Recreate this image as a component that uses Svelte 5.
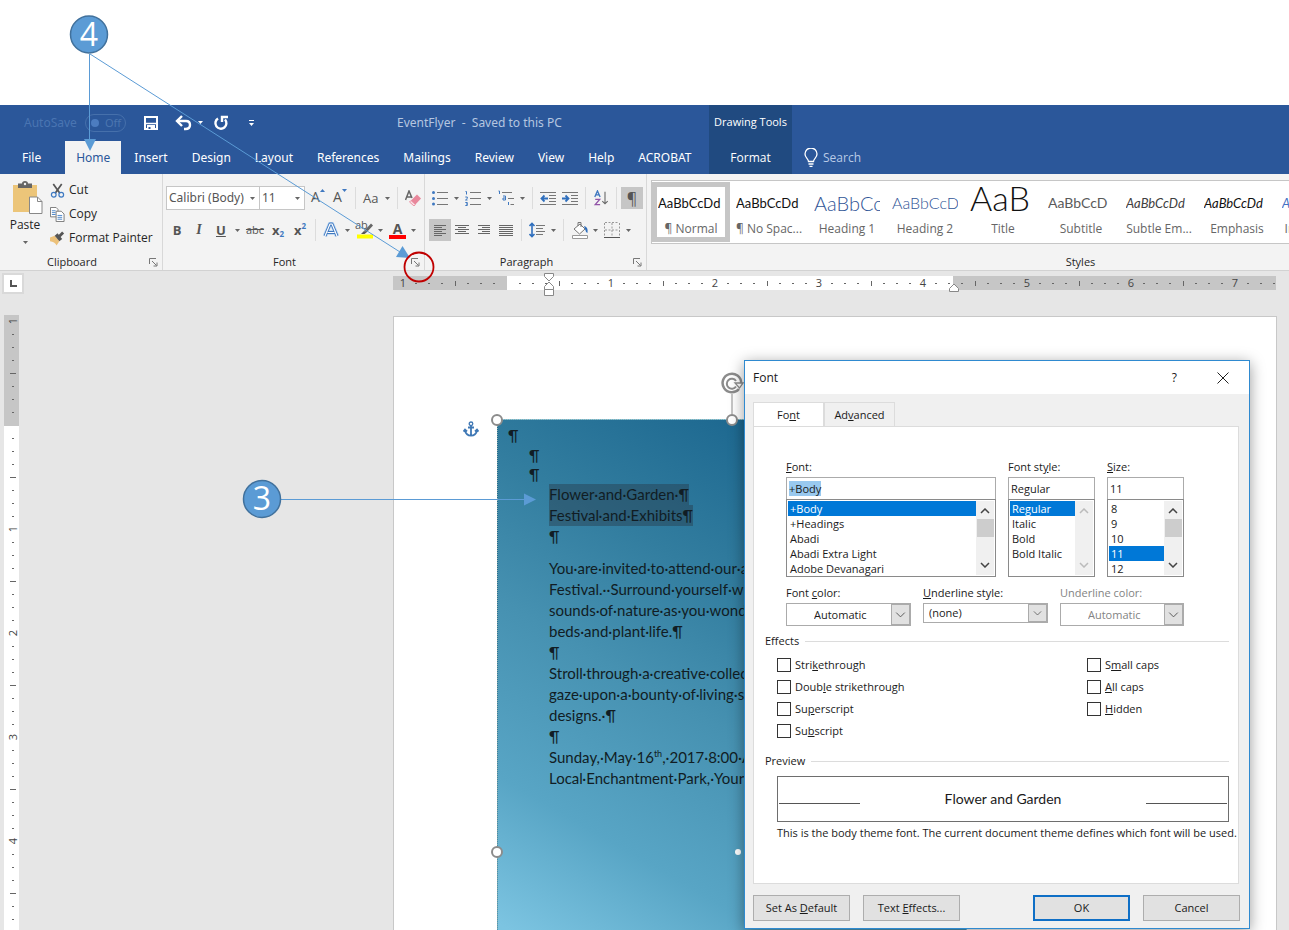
<script>
  import { onMount } from "svelte";

  const tabs = ["File", "Home", "Insert", "Design", "Layout", "References", "Mailings", "Review", "View", "Help", "ACROBAT"];
  let activeTab = $state("Home");

  const styles = [
    { sample: "AaBbCcDd", label: "¶ Normal", kind: "body" },
    { sample: "AaBbCcDd", label: "¶ No Spac...", kind: "body" },
    { sample: "AaBbCc", label: "Heading 1", kind: "h1" },
    { sample: "AaBbCcD", label: "Heading 2", kind: "h2" },
    { sample: "AaB", label: "Title", kind: "title" },
    { sample: "AaBbCcD", label: "Subtitle", kind: "subtitle" },
    { sample: "AaBbCcDd", label: "Subtle Em...", kind: "subtle" },
    { sample: "AaBbCcDd", label: "Emphasis", kind: "emphasis" },
    { sample: "AaBbCcDd", label: "Intense E...", kind: "intense" },
  ];
  let activeStyle = $state("¶ Normal");

  const fonts = ["+Body", "+Headings", "Abadi", "Abadi Extra Light", "Adobe Devanagari"];
  const fontStyles = ["Regular", "Italic", "Bold", "Bold Italic"];
  const sizes = ["8", "9", "10", "11", "12"];
  let font = $state("+Body");
  let fontStyle = $state("Regular");
  let size = $state("11");

  // [before, access key, after]
  const effectsLeft = [
    ["Stri", "k", "ethrough"],
    ["Doub", "l", "e strikethrough"],
    ["Su", "p", "erscript"],
    ["Su", "b", "script"],
  ];
  const effectsRight = [
    ["S", "m", "all caps"],
    ["", "A", "ll caps"],
    ["", "H", "idden"],
  ];

  // ruler: 104px per inch, eight marks each
  const INCH = 104;
  const marks = (from, to) => {
    const out = [];
    for (let i = from; i <= to; i++) {
      if (i === 0) continue;
      const kind = i % 8 === 0 ? "num" : i % 4 === 0 ? "half" : "dot";
      out.push({ at: (i * INCH) / 8, kind, label: Math.abs(i / 8) });
    }
    return out;
  };
  const hMarks = marks(-8, 59);
  const vMarks = marks(-8, 40);

  let fontInput;
  onMount(() => fontInput.select());
</script>

{#snippet drop()}
  <svg class="drop" viewBox="0 0 5 3"><path d="M0 0h5L2.500 3z" /></svg>
{/snippet}

{#snippet launcher(label)}
  <button class="launcher" aria-label={label}>
    <svg viewBox="0 0 9 9" fill="none" stroke="#777"><path d="M.5 6V.5H7M3 3l4.500 4.500M8 4.500V8H4.500" /></svg>
  </button>
{/snippet}

{#snippet lines(rows)}
  <svg viewBox="0 0 16 16" stroke="#666">
    {#each rows as [x, w], i}
      <path d="M{x} {3.5 + i * 2}h{w}" />
    {/each}
  </svg>
{/snippet}

{#snippet arrows()}
  <div class="scroll">
    <svg viewBox="0 0 10 6"><path d="M1 5l4-4 4 4" /></svg>
    <i></i>
    <svg viewBox="0 0 10 6"><path d="M1 1l4 4 4-4" /></svg>
  </div>
{/snippet}

{#snippet chevron()}
  <svg viewBox="0 0 17 20"><path d="M4 8l4.500 4.500L13 8" /></svg>
{/snippet}

{#snippet check([a, key, b])}
  <label class="check"><input type="checkbox" /><span>{a}<u>{key}</u>{b}</span></label>
{/snippet}

<div class="screen">
  <header class="titlebar">
    <div class="main-tabs">
      <div class="quick">
        <span class="autosave">AutoSave</span>
        <button class="toggle" disabled><i></i>Off</button>
        <button class="qa save" aria-label="Save">
          <svg viewBox="0 0 16 16" fill="none" stroke="#fff" stroke-width="2"><path d="M2 2h12v12H2z" /><path d="M2 8.500h12" stroke-width="1.500" /><path d="M5 15v-4h6v4" fill="#fff" /><path d="M6.500 14v-2" stroke="#2b579a" /></svg>
        </button>
        <button class="qa undo" aria-label="Undo">
          <svg viewBox="0 0 18 16" fill="none" stroke="#fff" stroke-width="2.400"><path d="M2 6h9q4 0 4 4t-4.500 4H9" /><path d="M7 1L2 6l5 5" /></svg>
        </button>
        <span class="light">{@render drop()}</span>
        <button class="qa redo" aria-label="Repeat">
          <svg viewBox="0 0 16 16" fill="none" stroke="#fff" stroke-width="2.400"><path d="M5 3.500A5.500 5.500 0 1 0 12 4.500" /><path d="M9 7V2h6" /></svg>
        </button>
        <button class="customize" aria-label="Customize"><i></i>{@render drop()}</button>
        <span class="doc-name">EventFlyer&nbsp; -&nbsp; Saved to this PC</span>
      </div>
      <nav class="tabs">
        {#each tabs as tab}
          <button class="tab" class:active={tab === activeTab} class:file={tab === "File"} onclick={() => (activeTab = tab)}>{tab}</button>
        {/each}
      </nav>
    </div>
    <div class="context">
      <span>Drawing Tools</span>
      <button>Format</button>
    </div>
    <button class="search">
      <svg viewBox="0 0 14 20" fill="none" stroke="#fff" stroke-width="1.300"><path d="M4.500 13.500c0-3-3.500-3.500-3.500-7.500a6 6 0 0 1 12 0c0 4-3.500 4.500-3.500 7.500zM4.500 16h5M5.500 18.300h3" /></svg>
      Search
    </button>
  </header>

  <div class="ribbon">
    <section class="group clipboard">
      <div class="clip-body">
        <button class="paste">
          <svg viewBox="0 0 32 34">
            <path d="M1 4h24v27H1z" fill="#ecc579" />
            <path d="M6 2.500h4Q10 0 13 0t3 2.500h4V7H6z" fill="#666" /><circle cx="13" cy="3" r="1.200" fill="#f3f3f3" />
            <path d="M17.500 16h8l4.500 4.500V32.500H17.500z" fill="#fff" stroke="#888" /><path d="M25.500 16v4.500H30" fill="none" stroke="#888" />
          </svg>
          <span>Paste</span>
          {@render drop()}
        </button>
        <div class="clip-list">
          <button>
            <svg viewBox="0 0 16 16" fill="none"><path d="M3.500 1L10.500 11M12.500 1L5.500 11" stroke="#555" stroke-width="1.800" /><circle cx="4" cy="12.500" r="2.500" stroke="#3f7ac2" stroke-width="1.300" /><circle cx="12" cy="12.500" r="2.500" stroke="#3f7ac2" stroke-width="1.300" /></svg>
            Cut
          </button>
          <button>
            <svg viewBox="0 0 16 16" fill="#fff" stroke="#777"><path d="M.5 .5h6l2 2v8h-8z" /><path d="M6.500 4.500h5.500l3 3v8H6.500z" /><path d="M2 4h4M2 6h4M2 8h4M8 9h5M8 11h5M8 13h5" stroke="#4a84c8" /></svg>
            Copy
          </button>
          <button>
            <svg viewBox="0 0 16 16"><path d="M0 7l5-2 5 6-3 4.500q-2-4-7-4.500z" fill="#ecc17a" /><path d="M5 5l3-2.500 5 6L10 11z" fill="#555" /><path d="M10 5.500L14 1.500" stroke="#555" stroke-width="3" /></svg>
            Format Painter
          </button>
        </div>
      </div>
      <div class="group-label"><span>Clipboard</span>{@render launcher("Clipboard settings")}</div>
    </section>

    <section class="group">
      <div class="tools">
        <div class="row">
          <span class="combo family"><select aria-label="Font name"><option>Calibri (Body)</option></select>{@render drop()}</span>
          <span class="combo points"><select aria-label="Font size"><option>11</option></select>{@render drop()}</span>
          <button class="tool grow">A<svg viewBox="0 0 5 3"><path d="M0 3h5L2.500 0z" /></svg></button>
          <button class="tool grow">A<svg viewBox="0 0 5 3"><path d="M0 0h5L2.500 3z" /></svg></button>
          <i class="sep"></i>
          <button class="tool split aa">Aa{@render drop()}</button>
          <i class="sep"></i>
          <button class="tool" aria-label="Clear formatting">
            <svg viewBox="0 0 16 16"><path d="M.5 10L4 1l3 7M2 7h4" fill="none" stroke="#666" stroke-width="1.500" /><path d="M4.500 12L12 4.500l4 4L9 16z" fill="#e8879b" /><path d="M4.500 12l1.500-1.500 4.300 4L9 16z" fill="#fbe4e9" stroke="#e8879b" stroke-width=".8" /></svg>
          </button>
        </div>
        <div class="row">
          <button class="tool bold">B</button>
          <button class="tool ital">I</button>
          <button class="tool split bold"><u>U</u>{@render drop()}</button>
          <button class="tool strike">abc</button>
          <button class="tool bold script">x<sub>2</sub></button>
          <button class="tool bold script">x<sup>2</sup></button>
          <i class="sep"></i>
          <button class="tool split" aria-label="Text effects">
            <svg viewBox="0 0 16 16" fill="none" stroke-linejoin="round"><path d="M2 14L7 2h2l5 12M4.500 10.500h7" stroke="#b9d5f1" stroke-width="4.500" /><path d="M2 14L7 2h2l5 12M4.500 10.500h7" stroke="#3f78c0" stroke-width="3" /><path d="M2 14L7 2h2l5 12M4.500 10.500h7" stroke="#fff" stroke-width="1.200" /></svg>
            {@render drop()}
          </button>
          <button class="tool split marker">
            <span>ab</span>
            <svg viewBox="0 0 18 18"><path d="M8 10l7-7.500 2 2-6.500 7z" fill="#666" /><path d="M5 13l3-3 2.500 1.500L8.500 13z" fill="#555" /><path d="M1 13.500h16v4H1z" fill="#ff0" /></svg>
            {@render drop()}
          </button>
          <button class="tool split colour"><span>A</span>{@render drop()}</button>
        </div>
      </div>
      <div class="group-label"><span>Font</span>{@render launcher("Font settings")}</div>
    </section>

    <section class="group paragraph">
      <div class="tools">
        <div class="row">
          <button class="tool split" aria-label="Bullets">
            <svg viewBox="0 0 16 16"><g fill="#3f78c0"><circle cx="1.500" cy="2.500" r="1.500" /><circle cx="1.500" cy="8.500" r="1.500" /><circle cx="1.500" cy="14" r="1.500" /></g><path d="M5 2.500h11M5 8.500h11M5 14.500h11" stroke="#777" /></svg>
            {@render drop()}
          </button>
          <button class="tool split" aria-label="Numbering">
            <svg viewBox="0 0 16 16"><path d="M.5 1.500h1v3M.3 7h2v1.500L.5 10h2M.3 12.500h2v3h-2M1 14h1" fill="none" stroke="#3f78c0" /><path d="M5 2.500h11M5 8.500h11M5 14.500h11" stroke="#777" /></svg>
            {@render drop()}
          </button>
          <button class="tool split" aria-label="Multilevel list">
            <svg viewBox="0 0 16 16" fill="none"><path d="M.5 1h1v3M5 6h2.500v4H5V8h2M10.500 12v3" stroke="#3f78c0" /><path d="M4 2.500h10M10 8.500h6M12.500 14.500H16" stroke="#777" /></svg>
            {@render drop()}
          </button>
          <i class="sep"></i>
          <button class="tool" aria-label="Decrease indent">
            <svg viewBox="0 0 16 16" fill="none"><path d="M0 2.500h16M9 5.500h7M9 8.500h7M9 11.500h7M0 14.500h16" stroke="#777" /><path d="M8 8.500H1.500M4.500 5.500l-3 3 3 3" stroke="#2f6fbd" stroke-width="1.800" /></svg>
          </button>
          <button class="tool" aria-label="Increase indent">
            <svg viewBox="0 0 16 16" fill="none"><path d="M0 2.500h16M9 5.500h7M9 8.500h7M9 11.500h7M0 14.500h16" stroke="#777" /><path d="M0 8.500h6.500M3.500 5.500l3 3-3 3" stroke="#2f6fbd" stroke-width="1.800" /></svg>
          </button>
          <i class="sep"></i>
          <button class="tool" aria-label="Sort">
            <svg viewBox="0 0 16 18" fill="none" stroke-width="1.500"><path d="M1 8L4 1l3 7M2 5.500h4" stroke="#3f78c0" /><path d="M1.500 10.500h5L1.500 16.500h5.500" stroke="#9255a8" /><path d="M12.500 2v13.500M9.500 12.500l3 3 3-3" stroke="#666" stroke-width="1.200" /></svg>
          </button>
          <i class="sep"></i>
          <button class="tool on pilcrow">¶</button>
        </div>
        <div class="row">
          <button class="tool on" aria-label="Align left">{@render lines([[2, 12], [2, 8], [2, 12], [2, 8], [2, 12], [2, 8]])}</button>
          <button class="tool" aria-label="Center">{@render lines([[1, 14], [4, 8], [1, 14], [4, 8], [1, 14]])}</button>
          <button class="tool" aria-label="Align right">{@render lines([[2, 12], [6, 8], [2, 12], [6, 8], [2, 12]])}</button>
          <button class="tool" aria-label="Justify">{@render lines([[1, 14], [1, 14], [1, 14], [1, 14], [1, 14], [1, 14]])}</button>
          <i class="sep"></i>
          <button class="tool split" aria-label="Line spacing">
            <svg viewBox="0 0 16 16" fill="none"><path d="M3 1.500v13M.5 4L3 1.500 5.500 4M.5 12L3 14.500 5.500 12" stroke="#2f6fbd" stroke-width="1.600" /><path d="M7 3.500h9M7 6.500h7M7 9.500h9M7 12.500h7" stroke="#777" /></svg>
            {@render drop()}
          </button>
          <i class="sep"></i>
          <button class="tool split wide-icon" aria-label="Shading">
            <svg viewBox="0 0 18 18" fill="none"><path d="M3 8l6-5 5 5-5.500 5z" fill="#fff" stroke="#777" /><path d="M7 5V1.500h3V6" stroke="#777" /><path d="M13 5q4.500 1 3.500 7-2-1-2.500-4z" fill="#2f6fbd" /><path d="M1.500 14.500h15v3h-15z" fill="#fff" stroke="#999" /></svg>
            {@render drop()}
          </button>
          <button class="tool split" aria-label="Borders">
            <svg viewBox="0 0 16 16" fill="none" stroke="#999"><path d="M.5 1v14M8 1v14M15.500 1v14M1 .5h14M1 8h14" stroke-dasharray="2 1.500" /><path d="M0 15.500h16" stroke="#555" /></svg>
            {@render drop()}
          </button>
        </div>
      </div>
      <div class="group-label"><span>Paragraph</span>{@render launcher("Paragraph settings")}</div>
    </section>

    <section class="group styles">
      <div class="gallery">
        {#each styles as style}
          <button class="style" class:picked={style.label === activeStyle} onclick={() => (activeStyle = style.label)}>
            <span class="sample {style.kind}">{style.sample}</span>
            <span class="style-name">{style.label}</span>
          </button>
        {/each}
      </div>
      <div class="group-label"><span>Styles</span></div>
    </section>
  </div>

  <main class="workspace">
    <div class="corner"><button aria-label="Tab stop"><svg viewBox="0 0 7 7"><path d="M1 0v6h6" fill="none" stroke="#555" stroke-width="2" /></svg></button></div>
    <svg class="h-ruler" width="883" height="26">
      <path d="M0 5h883v14H0z" fill="#c6c6c6" />
      <path d="M114 5h446v14H114z" fill="#fff" />
      {#each hMarks as m}
        {#if m.kind === "num"}
          <text x={114 + m.at} y="16">{m.label}</text>
        {:else if m.kind === "half"}
          <path d="M{114 + m.at + 0.5} 10v5" stroke="#666" />
        {:else}
          <path d="M{113 + m.at} 12.500h2" stroke="#666" />
        {/if}
      {/each}
      <g fill="#fff" stroke="#888"><path d="M151.500 2.500h9v3l-4.500 4.500-4.500-4.500z" /><path d="M151.500 18.500v-3L156 11l4.500 4.500v3z" /><path d="M151.500 18.500h9v6h-9z" /><path d="M556.500 20.500v-3l4.500-4.500 4.500 4.500v3z" /></g>
    </svg>
    <svg class="v-ruler" width="15" height="640">
      <path d="M0 0h15v640H0z" fill="#fff" />
      <path d="M0 0h15v111H0z" fill="#c6c6c6" />
      {#each vMarks as m}
        {#if m.kind === "num"}
          <text x="9" y={110 + m.at} transform="rotate(-90 9 {110 + m.at})" dy="4">{m.label}</text>
        {:else if m.kind === "half"}
          <path d="M6 {110 + m.at + 0.5}h6" stroke="#666" />
        {:else}
          <path d="M8 {110 + m.at + 0.5}h2" stroke="#666" />
        {/if}
      {/each}
    </svg>
    <div class="paper">
      <svg class="anchor" viewBox="0 0 16 16" fill="none" stroke="#3f78b5" stroke-width="1.800"><circle cx="8" cy="2.800" r="1.800" stroke-width="1.300" /><path d="M8 5v9.500M5 6.500h6M2 9.500q1 5 6 5.200 5-.2 6-5.200M.5 10.500L2 8.500l2 2M12 10.500l2-2 1.500 2" /></svg>
      <article class="flyer">
        <p class="first">¶</p>
        <p class="inset">¶</p>
        <p class="inset">¶</p>
        <p><mark>Flower·and·Garden·¶</mark></p>
        <p><mark>Festival·and·Exhibits¶</mark></p>
        <p>¶</p>
        <p class="spaced">You·are·invited·to·attend·our·a</p>
        <p>Festival.··Surround·yourself·wi</p>
        <p>sounds·of·nature·as·you·wond</p>
        <p>beds·and·plant·life.¶</p>
        <p>¶</p>
        <p>Stroll·through·a·creative·collec</p>
        <p>gaze·upon·a·bounty·of·living·sc</p>
        <p>designs.·¶</p>
        <p>¶</p>
        <p>Sunday,·May·16<sup>th</sup>,·2017·8:00·A</p>
        <p>Local·Enchantment·Park,·Yourt</p>
        <i class="handle top-left"></i>
        <i class="handle top"></i>
        <i class="handle left"></i>
        <i class="dot"></i>
        <svg class="rotate" viewBox="0 0 24 42" fill="none" stroke="#8c8c8c"><path d="M12 22v20" /><path d="M19 17A9.300 9.300 0 1 1 21.200 11" stroke-width="2.500" /><path d="M16 14.500A5 5 0 1 1 16 9" stroke-width="2" /><path d="M15 11h8l-3.500 5z" fill="#fff" stroke-width="1.300" /></svg>
      </article>
    </div>
  </main>

  <div class="dialog" role="dialog" aria-label="Font">
    <div class="dialog-title">
      <span>Font</span>
      <button>?</button>
      <button aria-label="Close"><svg viewBox="0 0 12 12" stroke="#222"><path d="M.5 .5l11 11M11.500 .5l-11 11" /></svg></button>
    </div>
    <div class="dialog-body">
      <div class="dialog-tabs">
        <button class="current">Fo<u>n</u>t</button>
        <button>Ad<u>v</u>anced</button>
      </div>
      <div class="panel">
        <div class="fields lists">
          <div class="field">
            <label for="font-name"><u>F</u>ont:</label>
            <input id="font-name" type="text" bind:this={fontInput} value={font} />
            <div class="listbox">
              <select size="5" aria-label="Fonts" bind:value={font}>{#each fonts as f}<option>{f}</option>{/each}</select>
              {@render arrows()}
            </div>
          </div>
          <div class="field">
            <label for="font-style">Font st<u>y</u>le:</label>
            <input id="font-style" type="text" value={fontStyle} />
            <div class="listbox idle">
              <select size="5" aria-label="Styles" bind:value={fontStyle}>{#each fontStyles as f}<option>{f}</option>{/each}</select>
              {@render arrows()}
            </div>
          </div>
          <div class="field">
            <label for="font-size"><u>S</u>ize:</label>
            <input id="font-size" type="text" value={size} />
            <div class="listbox">
              <select size="5" aria-label="Sizes" bind:value={size}>{#each sizes as s}<option>{s}</option>{/each}</select>
              {@render arrows()}
            </div>
          </div>
        </div>
        <div class="fields menus">
          <div class="field">
            <label for="font-color">Font <u>c</u>olor:</label>
            <span class="menu"><select id="font-color"><option>Automatic</option></select>{@render chevron()}</span>
          </div>
          <div class="field">
            <label for="underline-style"><u>U</u>nderline style:</label>
            <span class="menu short"><select id="underline-style"><option>(none)</option></select>{@render chevron()}</span>
          </div>
          <div class="field off">
            <label for="underline-color">Underline color:</label>
            <span class="menu"><select id="underline-color" disabled><option>Automatic</option></select>{@render chevron()}</span>
          </div>
        </div>
        <h3>Effects</h3>
        <div class="effects">
          <div>{#each effectsLeft as e}{@render check(e)}{/each}</div>
          <div>{#each effectsRight as e}{@render check(e)}{/each}</div>
        </div>
        <h3>Preview</h3>
        <div class="preview"><i></i><span>Flower and Garden</span><i></i></div>
        <p class="note">This is the body theme font. The current document theme defines which font will be used.</p>
      </div>
      <div class="actions">
        <button>Set As <u>D</u>efault</button>
        <button>Text <u>E</u>ffects...</button>
        <button class="ok">OK</button>
        <button>Cancel</button>
      </div>
    </div>
  </div>

  <svg class="callouts" width="560" height="530">
    <g stroke="#5b9bd5" fill="none"><path d="M89.500 54V141M90 54L400 252M281 499.500H525" /></g>
    <g fill="#5b9bd5"><path d="M84 139h12l-6 12z" /><path d="M410 258l-14-1 6.500-11z" /><path d="M524 493.500v12l12-6z" /></g>
    <g fill="#5b9bd5" stroke="#41719c" stroke-width="1.500"><circle cx="89" cy="34.500" r="18.500" /><circle cx="262" cy="499" r="18.500" /></g>
    <text x="89" y="46">4</text>
    <text x="262" y="510">3</text>
    <circle cx="419" cy="267" r="14.500" fill="none" stroke="#c00000" stroke-width="1.800" />
  </svg>
</div>

<style>
  :global(body) {
    margin: 0;
    background: #fff;
  }

  .screen {
    position: relative;
    display: flex;
    flex-direction: column;
    height: 100vh;
    padding-top: 105px;
    box-sizing: border-box;
    overflow: hidden;
    font-family: "Open Sans", "Noto Sans", sans-serif;
    font-size: 12px;
    line-height: 16px;
    color: #262626;
  }

  button,
  input,
  select {
    box-sizing: border-box;
    margin: 0;
    padding: 0;
    border: none;
    border-radius: 0;
    outline: none;
    background: none;
    font: inherit;
    color: inherit;
  }

  select {
    appearance: none;
  }

  svg {
    flex: none;
  }

  .drop {
    width: 5px;
    height: 3px;
    fill: #666;
  }

  /* title bar */
  .titlebar {
    display: flex;
    flex: none;
    height: 69px;
    background: #2b579a;
    color: #fff;
    font-family: "Noto Sans", sans-serif;
  }

  .main-tabs {
    width: 709px;
  }

  .quick {
    display: flex;
    align-items: center;
    height: 35px;
    padding-left: 24px;
    color: #b5c6e0;
  }

  .autosave {
    width: 61px;
    color: #4a75b2;
  }

  .toggle {
    display: flex;
    align-items: center;
    gap: 6px;
    width: 41px;
    height: 18px;
    margin-right: 17px;
    padding-left: 5px;
    border: 1px solid #4670ab;
    border-radius: 9px;
    color: #4c76b0;
    font-size: 11px;
  }

  .toggle i {
    width: 8px;
    height: 8px;
    border-radius: 50%;
    background: #4c7cc0;
  }

  .qa svg {
    display: block;
    height: 16px;
  }

  .undo {
    margin: 0 5px 0 16px;
  }

  .light {
    display: flex;
    margin-right: 10px;
  }

  .titlebar .drop {
    fill: #fff;
  }

  .customize {
    display: flex;
    flex-direction: column;
    gap: 2px;
    margin: 0 143px 0 20px;
  }

  .customize i {
    height: 1px;
    background: #fff;
  }

  .tabs {
    display: flex;
    gap: 2px;
    height: 34px;
    padding: 1px 0 0 11px;
  }

  .tab {
    padding: 0 11px;
    white-space: nowrap;
  }

  .tab.file {
    margin-right: 11px;
  }

  .tab.active {
    background: #f3f3f3;
    color: #2b579a;
  }

  .context {
    display: flex;
    flex-direction: column;
    width: 83px;
    background: #204a80;
    text-align: center;
    font-family: "Open Sans", sans-serif;
    font-size: 11px;
  }

  .context span {
    padding: 9px 0 11px;
    white-space: nowrap;
  }

  .context button {
    height: 33px;
    font-size: 12px;
  }

  .search {
    display: flex;
    align-items: center;
    gap: 5px;
    margin-top: 36px;
    padding-left: 12px;
    color: #b9cbe6;
    font-family: "Open Sans", sans-serif;
  }

  .search svg {
    height: 20px;
  }

  /* ribbon */
  .ribbon {
    display: flex;
    flex: none;
    height: 97px;
    box-sizing: border-box;
    border-bottom: 1px solid #d2d2d2;
    background: #f3f3f3;
  }

  .group {
    display: flex;
    flex: none;
    flex-direction: column;
    box-sizing: border-box;
    width: 262px;
    border-right: 1px solid #d8d8d8;
  }

  .group.clipboard {
    width: 163px;
  }

  .group.paragraph {
    width: 222px;
  }

  .group.paragraph .tools {
    padding-left: 4px;
  }

  .group.styles {
    flex: 1 0 868px;
  }

  .group-label {
    position: relative;
    margin-top: auto;
    padding-right: 18px;
    height: 16px;
    text-align: center;
    font-size: 11px;
  }

  .styles .group-label {
    padding-right: 0;
  }

  .launcher {
    position: absolute;
    right: 4px;
    top: 4px;
  }

  .launcher svg {
    display: block;
    width: 9px;
    height: 9px;
  }

  .clip-body {
    display: flex;
    padding-top: 4px;
  }

  .paste {
    display: flex;
    flex-direction: column;
    align-items: center;
    width: 50px;
    height: 72px;
    padding-top: 3px;
  }

  .paste > svg:first-child {
    width: 32px;
    height: 34px;
    margin-left: 6px;
  }

  .paste span {
    margin: 2px 0 8px;
  }

  .clip-list button {
    display: flex;
    align-items: center;
    gap: 4px;
    height: 24px;
    white-space: nowrap;
  }

  .clip-list svg {
    width: 15px;
    height: 15px;
  }

  .tools {
    display: flex;
    flex-direction: column;
    gap: 10px;
    padding: 13px 0 0 3px;
  }

  .row {
    display: flex;
    align-items: center;
    height: 22px;
  }

  .combo {
    display: flex;
    align-items: center;
    box-sizing: border-box;
    height: 24px;
    padding-right: 4px;
    border: 1px solid #c6c6c6;
    background: #fff;
    color: #555;
  }

  .combo select {
    flex: 1;
    min-width: 0;
    padding-left: 2px;
    white-space: nowrap;
    font-family: "Noto Sans", sans-serif;
  }

  .combo.family {
    width: 94px;
  }

  .combo.points {
    width: 46px;
    margin: 0 2px 0 -1px;
  }

  .sep {
    width: 1px;
    height: 22px;
    margin: 0 4px;
    background: #dcdcdc;
  }

  .tool {
    display: flex;
    flex: none;
    align-items: center;
    justify-content: center;
    width: 22px;
    height: 22px;
    color: #555;
  }

  .tool > svg:not(.drop) {
    width: 16px;
    height: 16px;
  }

  .tool.split {
    justify-content: space-between;
    width: 33px;
    padding: 0 3px;
  }

  .tool.on {
    background: #c6c6c6;
  }

  .grow {
    align-items: flex-start;
    padding-top: 2px;
    font-size: 14px;
  }

  .grow > svg:not(.drop) {
    width: 5px;
    height: 3px;
    fill: #3f78c0;
  }

  .aa {
    font-size: 13px;
  }

  .bold {
    font-weight: 700;
    font-size: 13px;
  }

  .bold u {
    padding-left: 3px;
  }

  .ital {
    font: italic 700 14px "Liberation Serif", serif;
  }

  .strike {
    width: 24px;
    font-size: 11px;
    text-decoration: line-through;
  }

  .script sub,
  .script sup {
    font-size: 8px;
    line-height: 8px;
    color: #3f78c0;
  }

  .script sub {
    padding-top: 8px;
  }

  .script sup {
    padding-bottom: 8px;
  }

  .marker {
    position: relative;
  }

  .marker span {
    position: absolute;
    left: 2px;
    top: -2px;
    font-size: 11px;
  }

  .marker > svg:not(.drop),
  .wide-icon > svg:not(.drop) {
    width: 18px;
    height: 18px;
  }

  .colour span {
    width: 17px;
    border-bottom: 4px solid #f00;
    font-weight: 700;
    font-size: 14px;
    line-height: 13px;
  }

  .pilcrow {
    font-size: 16px;
  }

  .gallery {
    display: flex;
    box-sizing: border-box;
    height: 64px;
    margin: 6px 0 0 4px;
    padding: 1px 0;
    border: 1px solid #c6c6c6;
    background: #fff;
  }

  .style {
    display: flex;
    flex: none;
    flex-direction: column;
    align-items: center;
    width: 78px;
    height: 60px;
    border: 5px solid transparent;
    color: #666;
  }

  .style.picked {
    border-color: #c6c6c6;
  }

  .sample {
    display: flex;
    align-items: center;
    width: 66px;
    height: 32px;
    overflow: hidden;
    white-space: nowrap;
    font-family: Lato, sans-serif;
    font-size: 13px;
    color: #111;
  }

  .style-name {
    margin-top: 2px;
    white-space: nowrap;
  }

  .h1,
  .h2 {
    font-weight: 300;
    color: #2f5496;
  }

  .h1 {
    font-size: 20px;
  }

  .h2 {
    font-size: 16px;
  }

  .title {
    align-items: flex-start;
    font-weight: 300;
    font-size: 34px;
    line-height: 22px;
  }

  .subtitle {
    color: #5a5a5a;
    font-size: 14px;
  }

  .subtle,
  .emphasis,
  .intense {
    font-style: italic;
  }

  .subtle {
    color: #404040;
  }

  .intense {
    color: #4472c4;
  }

  /* workspace */
  .workspace {
    display: grid;
    flex: 1;
    grid-template-columns: 393px minmax(0, 1fr);
    grid-template-rows: 44px minmax(0, 1fr);
    min-height: 0;
    padding-right: 12px;
    background: #e6e6e6;
  }

  .corner button {
    display: flex;
    align-items: center;
    justify-content: center;
    width: 22px;
    height: 21px;
    margin: 2px 0 0 2px;
    border: 2px solid #d9d9d9;
    background: #fff;
  }

  .corner svg {
    width: 7px;
    height: 7px;
  }

  .h-ruler text,
  .v-ruler text {
    fill: #444;
    font-size: 11px;
    text-anchor: middle;
  }

  .v-ruler {
    margin-left: 4px;
  }

  .paper {
    position: relative;
    border: 1px solid #c8c8c8;
    border-bottom: none;
    background: #fff;
    overflow: hidden;
    margin-top: 1px;
  }

  .anchor {
    position: absolute;
    left: 69px;
    top: 104px;
    width: 16px;
    height: 16px;
  }

  .flyer {
    position: relative;
    box-sizing: border-box;
    width: 470px;
    height: 866px;
    margin: 102px 0 0 103px;
    padding-top: 5px;
    border: 1px dotted #8aa;
    background: linear-gradient(30deg, #7cc4e1 312px, #58a5c5 440px, #4691b1 593px, #327d9f 720px, #1d6890 871px);
    font-family: Lato, sans-serif;
    font-size: 15px;
    color: #111d24;
  }

  .flyer p {
    height: 21px;
    margin: 0;
    padding-left: 51px;
    line-height: 21px;
    white-space: nowrap;
  }

  .flyer .first {
    padding-left: 10px;
  }

  .flyer .inset {
    height: 19px;
    padding-left: 31px;
    line-height: 19px;
  }

  .flyer .spaced {
    margin-top: 11px;
  }

  .flyer sup {
    font-size: 9px;
    line-height: 9px;
  }

  mark {
    display: inline-block;
    height: 21px;
    background: rgba(40, 60, 75, 0.45);
    color: inherit;
  }

  .handle {
    position: absolute;
    box-sizing: border-box;
    width: 12px;
    height: 12px;
    border: 2px solid #8c8c8c;
    border-radius: 50%;
    background: #fff;
  }

  .top-left {
    left: -7px;
    top: -6px;
  }

  .top {
    left: 228px;
    top: -6px;
  }

  .left {
    left: -7px;
    top: 426px;
  }

  .dot {
    position: absolute;
    left: 237px;
    top: 429px;
    width: 6px;
    height: 6px;
    border-radius: 50%;
    background: #fff;
  }

  .rotate {
    position: absolute;
    left: 222px;
    top: -48px;
    width: 24px;
    height: 42px;
  }

  /* font dialog */
  .dialog {
    position: absolute;
    left: 744px;
    top: 360px;
    box-sizing: border-box;
    width: 506px;
    border: 1px solid #2f8ad0;
    background: #f0f0f0;
    box-shadow: 0 3px 14px rgba(0, 0, 0, 0.4);
    font-size: 11px;
    color: #1a1a1a;
  }

  .dialog-title {
    display: flex;
    align-items: center;
    height: 33px;
    padding: 0 20px 0 8px;
    background: #fff;
    font-size: 12px;
  }

  .dialog-title span {
    flex: 1;
  }

  .dialog-title button {
    margin-left: 40px;
  }

  .dialog-title svg {
    display: block;
    width: 12px;
    height: 12px;
  }

  .dialog-body {
    padding: 8px 9px 7px 8px;
  }

  .dialog-tabs {
    display: flex;
    height: 24px;
  }

  .dialog-tabs button {
    width: 71px;
    border: 1px solid #dcdcdc;
    border-bottom: none;
  }

  .dialog-tabs .current {
    background: #fff;
  }

  .panel {
    margin-right: 1px;
    padding: 32px 9px 42px 11px;
    border: 1px solid #dcdcdc;
    background: #fff;
  }

  .fields {
    display: grid;
    gap: 12px;
    padding-left: 21px;
  }

  .lists {
    grid-template-columns: 210px 87px 77px;
  }

  .menus {
    grid-template-columns: 125px 125px 124px;
    margin: 8px 0 7px;
  }

  .field {
    display: flex;
    flex-direction: column;
  }

  .field label {
    margin-bottom: 2px;
    white-space: nowrap;
  }

  .off {
    color: #838383;
  }

  .field input {
    height: 22px;
    padding: 0 2px;
    border: 1px solid #ababab;
    border-bottom: none;
    background: #fff;
  }

  .field input::selection {
    background: #99c9ef;
    color: #1a1a1a;
  }

  .listbox {
    display: flex;
    box-sizing: border-box;
    height: 78px;
    padding: 1px;
    border: 1px solid #8a8a8a;
  }

  .listbox select {
    flex: 1;
    min-width: 0;
    height: 75px;
    overflow: hidden;
    scrollbar-width: none;
  }

  .listbox option {
    min-height: 15px;
    height: 15px;
    padding: 0 2px;
    line-height: 15px;
  }

  .listbox option:checked {
    background: #0078d7 linear-gradient(#0078d7, #0078d7);
    -webkit-text-fill-color: #fff;
  }

  .scroll {
    display: flex;
    flex-direction: column;
    align-items: center;
    justify-content: space-between;
    box-sizing: border-box;
    width: 18px;
    padding: 7px 0;
    background: #f0f0f0;
  }

  .scroll svg,
  .menu svg {
    fill: none;
    stroke: #444;
    stroke-width: 1.5;
  }

  .scroll svg {
    width: 10px;
    height: 6px;
  }

  .scroll i {
    width: 17px;
    height: 18px;
    margin-bottom: 20px;
    background: #cdcdcd;
  }

  .idle .scroll svg {
    stroke: #bbb;
  }

  .idle .scroll i {
    background: none;
  }

  .menu {
    display: flex;
    box-sizing: border-box;
    height: 23px;
    border: 1px solid #ababab;
  }

  .menu select {
    flex: 1;
    min-width: 0;
    padding-left: 27px;
    opacity: 1;
  }

  .menu svg {
    box-sizing: border-box;
    width: 19px;
    height: 100%;
    border: 1px solid #ababab;
    background: #e1e1e1;
    stroke: #555;
    stroke-width: 1;
  }

  .menu.short {
    height: 20px;
  }

  .short select {
    padding-left: 5px;
  }

  h3 {
    display: flex;
    align-items: center;
    gap: 6px;
    margin: 0;
    font-size: 11px;
    font-weight: 400;
  }

  h3::after {
    content: "";
    flex: 1;
    height: 1px;
    background: #dcdcdc;
  }

  .effects {
    display: grid;
    grid-template-columns: 310px 1fr;
    margin: 5px 0 11px;
    padding-left: 12px;
  }

  .check {
    display: flex;
    align-items: center;
    gap: 4px;
    height: 22px;
  }

  .check input {
    appearance: none;
    width: 14px;
    height: 14px;
    border: 1px solid #333;
    background: #fff;
  }

  .preview {
    display: flex;
    align-items: center;
    justify-content: space-between;
    box-sizing: border-box;
    height: 46px;
    margin: 7px 0 3px 12px;
    padding: 0 1px;
    border: 1px solid #6e6e6e;
    font-family: Lato, sans-serif;
    font-size: 14px;
  }

  .preview i {
    width: 81px;
    height: 1px;
    margin-top: 8px;
    background: #555;
  }

  .note {
    margin: 0 0 0 12px;
    white-space: nowrap;
  }

  .actions {
    display: flex;
    gap: 13px;
    margin-top: 11px;
  }

  .actions button {
    width: 97px;
    height: 26px;
    border: 1px solid #adadad;
    background: #e1e1e1;
  }

  .actions .ok {
    margin-left: auto;
    border: 2px solid #0f6fc6;
  }

  .callouts {
    position: absolute;
    left: 0;
    top: 0;
    pointer-events: none;
  }

  .callouts text {
    fill: #fff;
    font-size: 32px;
    text-anchor: middle;
  }
</style>
